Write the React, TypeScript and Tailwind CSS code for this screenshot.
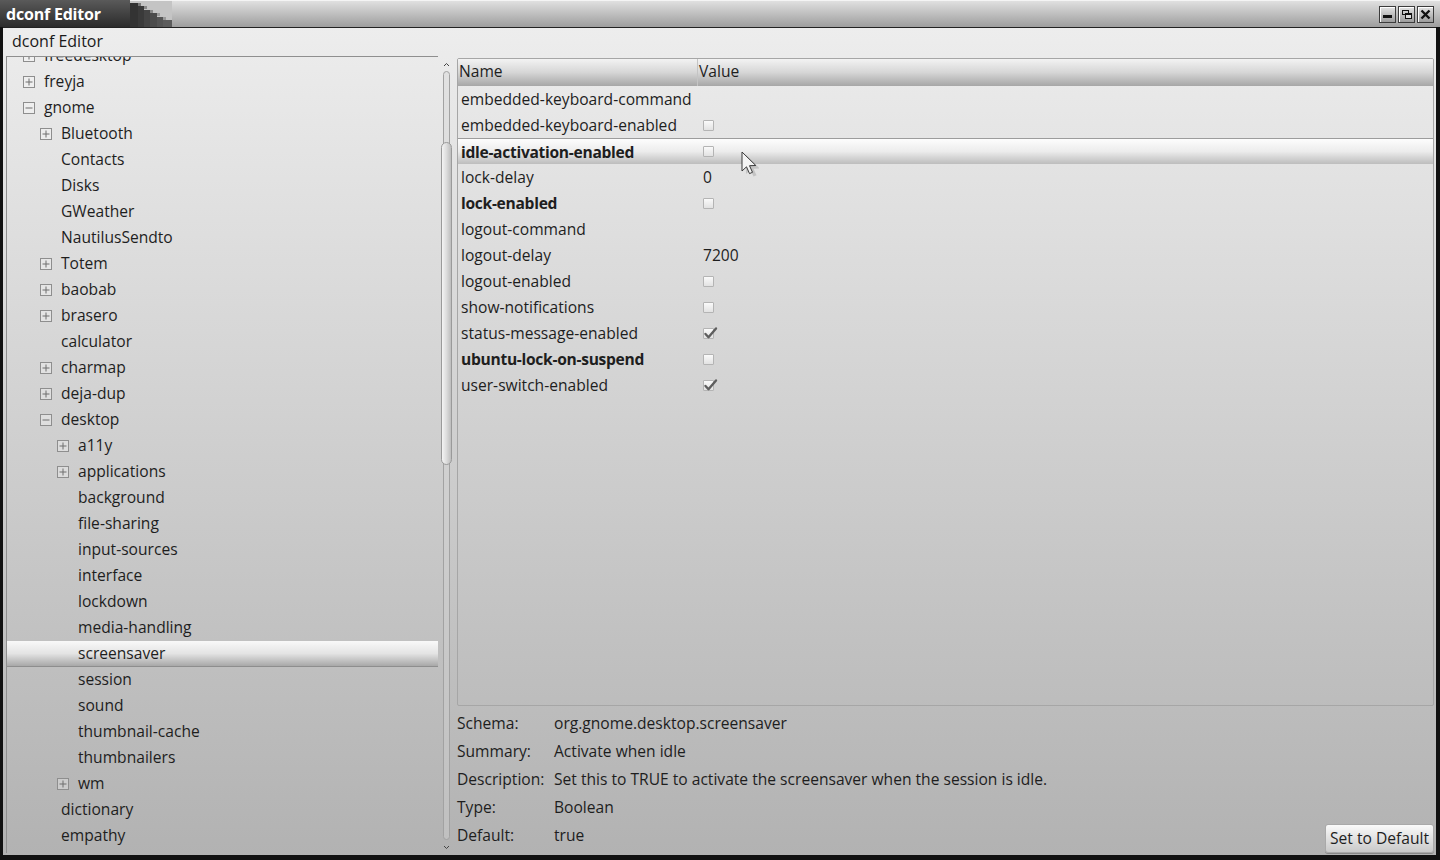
import React from 'react';

type Node = { name: string; level: number; exp?: 'plus' | 'minus'; selected?: boolean };

const tree: Node[] = [
  { name: 'freedesktop', level: 0, exp: 'plus' },
  { name: 'freyja', level: 0, exp: 'plus' },
  { name: 'gnome', level: 0, exp: 'minus' },
  { name: 'Bluetooth', level: 1, exp: 'plus' },
  { name: 'Contacts', level: 1 },
  { name: 'Disks', level: 1 },
  { name: 'GWeather', level: 1 },
  { name: 'NautilusSendto', level: 1 },
  { name: 'Totem', level: 1, exp: 'plus' },
  { name: 'baobab', level: 1, exp: 'plus' },
  { name: 'brasero', level: 1, exp: 'plus' },
  { name: 'calculator', level: 1 },
  { name: 'charmap', level: 1, exp: 'plus' },
  { name: 'deja-dup', level: 1, exp: 'plus' },
  { name: 'desktop', level: 1, exp: 'minus' },
  { name: 'a11y', level: 2, exp: 'plus' },
  { name: 'applications', level: 2, exp: 'plus' },
  { name: 'background', level: 2 },
  { name: 'file-sharing', level: 2 },
  { name: 'input-sources', level: 2 },
  { name: 'interface', level: 2 },
  { name: 'lockdown', level: 2 },
  { name: 'media-handling', level: 2 },
  { name: 'screensaver', level: 2, selected: true },
  { name: 'session', level: 2 },
  { name: 'sound', level: 2 },
  { name: 'thumbnail-cache', level: 2 },
  { name: 'thumbnailers', level: 2 },
  { name: 'wm', level: 2, exp: 'plus' },
  { name: 'dictionary', level: 1 },
  { name: 'empathy', level: 1 },
];

type Key = { name: string; value?: string; check?: boolean; bold?: boolean; selected?: boolean };

const keys: Key[] = [
  { name: 'embedded-keyboard-command' },
  { name: 'embedded-keyboard-enabled', check: false },
  { name: 'idle-activation-enabled', check: false, bold: true, selected: true },
  { name: 'lock-delay', value: '0' },
  { name: 'lock-enabled', check: false, bold: true },
  { name: 'logout-command' },
  { name: 'logout-delay', value: '7200' },
  { name: 'logout-enabled', check: false },
  { name: 'show-notifications', check: false },
  { name: 'status-message-enabled', check: true },
  { name: 'ubuntu-lock-on-suspend', check: false, bold: true },
  { name: 'user-switch-enabled', check: true },
];

const info = [
  ['Schema:', 'org.gnome.desktop.screensaver'],
  ['Summary:', 'Activate when idle'],
  ['Description:', 'Set this to TRUE to activate the screensaver when the session is idle.'],
  ['Type:', 'Boolean'],
  ['Default:', 'true'],
];

const indent = ['pl-[16px]', 'pl-[33px]', 'pl-[50px]'];

function Expander({ kind }: { kind?: 'plus' | 'minus' }) {
  if (!kind) return <span className="w-[12px] h-[12px] shrink-0" />;
  return (
    <span className="w-[12px] h-[12px] shrink-0 border border-[#8e8e8e] bg-white/30 flex items-center justify-center">
      <svg width="10" height="10" viewBox="0 0 10 10">
        <path d="M1.5 5h7" stroke="#6f6f6f" strokeWidth="1" />
        {kind === 'plus' && <path d="M5 1.5v7" stroke="#6f6f6f" strokeWidth="1" />}
      </svg>
    </span>
  );
}

function Check({ on }: { on: boolean }) {
  return (
    <span className="relative w-[11px] h-[11px] border border-[#b4b4b4] bg-linear-to-b from-[#fafafa] to-[#e2e2e2] rounded-[1px] inline-block">
      {on && (
        <svg className="absolute -top-[3px] -left-[1px]" width="15" height="14" viewBox="0 0 15 14">
          <path d="M2.5 8l3 3.2L13 2.5" stroke="#5e5e5e" strokeWidth="2.4" fill="none" strokeLinecap="round" strokeLinejoin="round" />
        </svg>
      )}
    </span>
  );
}

function WinButton({ children }: { children: React.ReactNode }) {
  return (
    <div className="w-[17px] h-[17px] border border-[#3c3c3c] bg-linear-to-b from-[#e4e4e4] to-[#9c9c9c] flex items-center justify-center shadow-[inset_1px_1px_0_#fff]">
      {children}
    </div>
  );
}

export default function App() {
  return (
    <div className="w-[1440px] h-[860px] overflow-hidden bg-[#111] font-['Open_Sans',sans-serif] text-[15.6px] text-[#1e1e1e] flex flex-col">
      {/* title bar */}
      <div className="h-[27px] flex shrink-0 relative">
        <div className="h-full w-[130px] bg-linear-to-b from-[#5a5a5a] to-[#2c2c2c] flex items-center pl-[6px]">
          <span className="text-white font-bold text-[16px] tracking-[-0.2px] leading-none">dconf Editor</span>
        </div>
        <svg width="42" height="27" viewBox="0 0 42 27" className="shrink-0" shapeRendering="crispEdges">
          <rect x="0" y="0" width="42" height="27" fill="#c4c4c4" />
          <rect x="0" y="0" width="42" height="1" fill="#f2f2f2" />
          <rect x="0" y="3" width="8" height="24" fill="#333" />
          <rect x="8" y="6" width="6" height="21" fill="#3a3a3a" />
          <rect x="14" y="10" width="6" height="17" fill="#444" />
          <rect x="20" y="13" width="7" height="14" fill="#4c4c4c" />
          <rect x="27" y="17" width="6" height="10" fill="#555" />
          <rect x="33" y="20" width="9" height="7" fill="#5c5c5c" />
          <rect x="8" y="3" width="3" height="3" fill="#777" />
          <rect x="14" y="6" width="3" height="3" fill="#888" />
          <rect x="20" y="10" width="3" height="3" fill="#888" />
          <rect x="27" y="13" width="3" height="3" fill="#999" />
          <rect x="33" y="17" width="3" height="3" fill="#999" />
        </svg>
        <div className="flex-1 h-full bg-linear-to-b from-[#e0e0e0] to-[#9e9e9e] border-t border-[#f4f4f4] flex items-center justify-end pr-[6px] gap-[2px]">
          <WinButton>
            <span className="w-[9px] h-[3px] bg-[#111] mt-[5px]" />
          </WinButton>
          <WinButton>
            <svg width="11" height="11" viewBox="0 0 11 11" shapeRendering="crispEdges">
              <rect x="1.5" y="1.5" width="6" height="4" fill="none" stroke="#111" strokeWidth="1.5" />
              <rect x="4.5" y="5" width="6" height="4.5" fill="#ddd" stroke="#111" strokeWidth="1.5" />
            </svg>
          </WinButton>
          <WinButton>
            <svg width="11" height="11" viewBox="0 0 11 11">
              <path d="M1.5 1.5l8 8M9.5 1.5l-8 8" stroke="#111" strokeWidth="2.4" />
            </svg>
          </WinButton>
        </div>
      </div>

      {/* window body */}
      <div className="flex-1 ml-[3px] mr-[4px] mb-[5px] border-t border-[#222] bg-linear-to-b from-[#ededed] to-[#b2b2b2] flex flex-col min-h-0 relative">
        <div className="h-[28px] flex items-center pl-[9px] pb-[2px] text-[16px] text-[#1a1a1a] shrink-0">dconf Editor</div>

        <div className="flex-1 flex min-h-0 pb-[2px]">
          {/* tree pane */}
          <div className="ml-[3px] w-[432px] border-l border-t border-[#8f8f8f] overflow-hidden shrink-0">
            <div className="-mt-[14px]">
              {tree.map((n) => (
                <div
                  key={n.name}
                  className={
                    'h-[26px] flex items-center gap-[9px] ' +
                    indent[n.level] +
                    (n.selected
                      ? ' bg-linear-to-b from-[#f9f9f9] via-[#e4e4e4] to-[#a8a8a8] border-b border-[#8e8e8e]'
                      : '')
                  }
                >
                  <Expander kind={n.exp} />
                  <span className="leading-none">{n.name}</span>
                </div>
              ))}
            </div>
          </div>

          {/* tree scrollbar */}
          <div className="w-[14px] ml-[1px] shrink-0 flex flex-col items-center relative">
            <svg className="mt-[6px]" width="7" height="5" viewBox="0 0 7 5">
              <path d="M1 4l2.5-2.5L6 4" stroke="#444" strokeWidth="1" fill="none" />
            </svg>
            <div className="flex-1 w-[7px] mt-[4px] mb-[5px] border border-[#a2a2a2] rounded-full bg-[#d4d4d4]/40 relative">
              <div className="absolute top-[70px] -left-[3px] w-[11px] h-[323px] rounded-full border border-[#9a9a9a] bg-linear-to-r from-[#f4f4f4] via-[#dcdcdc] to-[#bdbdbd]" />
            </div>
            <svg className="mb-[3px]" width="7" height="5" viewBox="0 0 7 5">
              <path d="M1 1l2.5 2.5L6 1" stroke="#444" strokeWidth="1" fill="none" />
            </svg>
          </div>

          {/* right side */}
          <div className="flex-1 ml-[4px] mr-[2px] flex flex-col min-w-0">
            <div className="mt-[2px] h-[648px] border border-[#a6a6a6] rounded-[2px] flex flex-col overflow-hidden relative">
              <div className="h-[27px] flex shrink-0 bg-linear-to-b from-[#f3f3f3] via-[#d6d6d6] to-[#a6a6a6]">
                <div className="w-[240px] border-r border-[#c4c4c4] flex items-center pl-[1px] pb-[1px]">Name</div>
                <div className="flex-1 flex items-center pl-[1px] pb-[1px]">Value</div>
              </div>
              {keys.map((k) => (
                <div
                  key={k.name}
                  className={
                    'h-[26px] flex items-center ' +
                    (k.selected
                      ? 'bg-linear-to-b from-[#fdfdfd] via-[#ececec] to-[#bdbdbd] border-t border-[#9c9c9c]'
                      : '')
                  }
                >
                  <div className={'w-[240px] pl-[3px] pt-[2px] leading-none ' + (k.bold ? 'font-bold tracking-[-0.3px]' : '')}>{k.name}</div>
                  <div className="flex-1 pl-[5px] leading-none flex items-center">
                    {k.value !== undefined && <span className="pt-[2px]">{k.value}</span>}
                    {k.check !== undefined && <Check on={k.check} />}
                  </div>
                </div>
              ))}
            </div>

            <div className="flex-1 flex items-end">
              <div className="flex-1 mb-[3px] grid grid-cols-[97px_1fr] auto-rows-[28px] items-center">
                {info.map(([l, v]) => (
                  <React.Fragment key={l}>
                    <div>{l}</div>
                    <div>{v}</div>
                  </React.Fragment>
                ))}
              </div>
              <button className="h-[29px] px-[4px] pt-[1px] rounded-[3px] border border-[#a9a9a9] bg-linear-to-b from-[#fafafa] to-[#c9c9c9] leading-none shadow-[0_1px_0_#888]">
                Set to Default
              </button>
            </div>
          </div>
        </div>

        {/* mouse cursor */}
        <svg className="absolute left-[736px] top-[123px]" width="20" height="28" viewBox="0 0 20 28">
          <path d="M5 2v19l4.5-4.2 3 6.8 3-1.3-3-6.6 6.3-.2z" fill="#8a8a8a" opacity="0.35" transform="translate(2 2)" />
          <path d="M3 1v19l4.5-4.2 3 6.8 3-1.3-3-6.6 6.3-.2z" fill="#f4f4f4" stroke="#3a3a3a" strokeWidth="1" strokeLinejoin="round" />
        </svg>
      </div>
    </div>
  );
}
